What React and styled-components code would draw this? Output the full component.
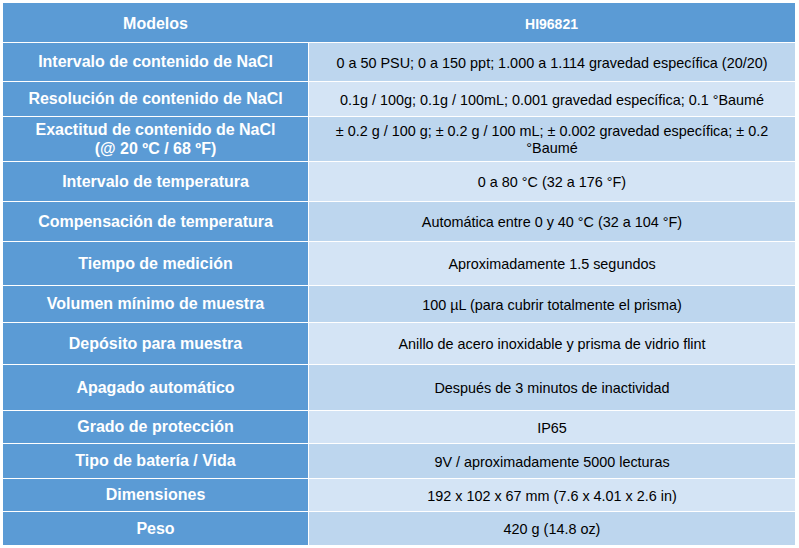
import React from "react";
import styled, { createGlobalStyle } from "styled-components";

const rows = [
  { label: "Intervalo de contenido de NaCl", value: "0 a 50 PSU; 0 a 150 ppt; 1.000 a 1.114 gravedad específica (20/20)", h: 38 },
  { label: "Resolución de contenido de NaCl", value: "0.1g / 100g; 0.1g / 100mL; 0.001 gravedad específica; 0.1 °Baumé", h: 34 },
  { label: ["Exactitud de contenido de NaCl", "(@ 20 ºC / 68 ºF)"], value: "± 0.2 g / 100 g; ± 0.2 g / 100 mL; ± 0.002 gravedad específica; ± 0.2 °Baumé", h: 44 },
  { label: "Intervalo de temperatura", value: "0 a 80 °C (32 a 176 °F)", h: 39 },
  { label: "Compensación de temperatura", value: "Automática entre 0 y 40 °C (32 a 104 °F)", h: 39 },
  { label: "Tiempo de medición", value: "Aproximadamente 1.5 segundos", h: 43 },
  { label: "Volumen mínimo de muestra", value: "100 µL (para cubrir totalmente el prisma)", h: 36 },
  { label: "Depósito para muestra", value: "Anillo de acero inoxidable y prisma de vidrio flint", h: 41 },
  { label: "Apagado automático", value: "Después de 3 minutos de inactividad", h: 45 },
  { label: "Grado de protección", value: "IP65", h: 32 },
  { label: "Tipo de batería / Vida", value: "9V / aproximadamente 5000 lecturas", h: 34 },
  { label: "Dimensiones", value: "192 x 102 x 67 mm (7.6 x 4.01 x 2.6 in)", h: 32 },
  { label: "Peso", value: "420 g (14.8 oz)", h: 33 },
];

const GlobalStyle = createGlobalStyle`
  html, body {
    margin: 0;
    padding: 0;
    background: #fff;
  }
  body {
    font-family: "Liberation Sans", Arial, sans-serif;
  }
`;

const Page = styled.div`
  padding: 3px;
`;

const Table = styled.div`
  width: 792px;
  display: flex;
  flex-direction: column;
  gap: 1px;
  background: #fff;
`;

const Row = styled.div`
  display: grid;
  grid-template-columns: 305px 1fr;
  gap: 1px;
  height: ${(p) => p.$h}px;
`;

const HeaderRow = styled(Row)`
  gap: 0;
  background: #5b9bd5;
`;

const HeadCell = styled.div`
  display: flex;
  align-items: center;
  justify-content: center;
  padding-top: 2px;
  color: #fff;
  font-weight: bold;
  font-size: ${(p) => p.$size}px;
`;

const Label = styled.div`
  display: flex;
  flex-direction: column;
  align-items: center;
  justify-content: center;
  padding-top: 1px;
  text-align: center;
  background: #5b9bd5;
  color: #fff;
  font-weight: bold;
  font-size: 16px;
  line-height: 1.15;
`;

const Value = styled.div`
  display: flex;
  align-items: center;
  justify-content: center;
  text-align: center;
  padding: 2px 7px 0;
  background-color: ${(p) => (p.$alt ? "#d4e4f5" : "#bdd6ee")};
  color: #000;
  font-size: 14.4px;
  line-height: 1.15;
`;

export default function App() {
  return (
    <Page>
      <GlobalStyle />
      <Table>
        <HeaderRow $h={39}>
          <HeadCell $size={16}>Modelos</HeadCell>
          <HeadCell $size={14}>HI96821</HeadCell>
        </HeaderRow>
        {rows.map((r, i) => (
          <Row key={i} $h={r.h}>
            <Label>
              {Array.isArray(r.label)
                ? r.label.map((l) => <span key={l}>{l}</span>)
                : r.label}
            </Label>
            <Value $alt={i % 2 === 1}>{r.value}</Value>
          </Row>
        ))}
      </Table>
    </Page>
  );
}
